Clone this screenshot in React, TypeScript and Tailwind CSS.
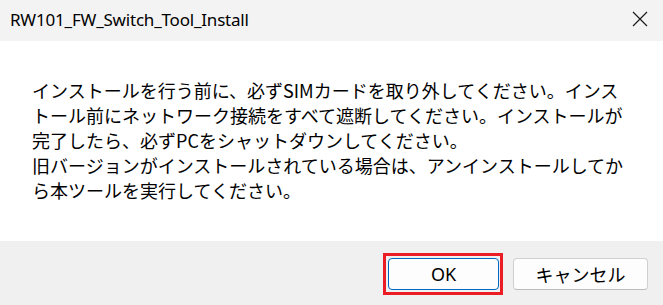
export default function App() {
  const lines = [
    "インストールを行う前に、必ずSIMカードを取り外してください。インス",
    "トール前にネットワーク接続をすべて遮断してください。インストールが",
    "完了したら、必ずPCをシャットダウンしてください。",
    "旧バージョンがインストールされている場合は、アンインストールしてか",
    "ら本ツールを実行してください。",
  ];

  return (
    <div className="w-[663px] h-[305px] flex flex-col bg-white overflow-hidden font-['Noto_Sans','Noto_Sans_CJK_JP',sans-serif] text-black">
      {/* Title bar */}
      <div className="h-[41px] shrink-0 bg-[#f3f3f3] flex items-center justify-between pl-[10px] pr-[15px]">
        <span className="text-[17px] leading-none tracking-[-0.2px] pb-[2px]">RW101_FW_Switch_Tool_Install</span>
        <svg width="16" height="16" viewBox="0 0 16 16" className="mb-[3px]">
          <path d="M1 1 L15 15 M15 1 L1 15" stroke="#1a1a1a" strokeWidth="1.2" fill="none" />
        </svg>
      </div>

      {/* Message */}
      <div className="flex-1 pt-[37px] pl-[32px]">
        <div className="text-[18px] leading-[25px] font-['Noto_Sans_CJK_JP',sans-serif]">
          {lines.map((l, i) => (
            <div key={i} className="whitespace-nowrap">{l}</div>
          ))}
        </div>
      </div>

      {/* Footer */}
      <div className="h-[64px] shrink-0 bg-[#f0f0f0] flex items-start justify-end gap-[10px] pt-[12px] pr-[15px]">
        <div className="border-[3px] border-[#ec1c24] p-[2px] pr-[1px]">
          <button className="w-[111px] h-[32px] rounded-[4px] bg-[#fdfdfd] border border-[#0067c0] text-[18px] leading-none flex items-center justify-center">
            OK
          </button>
        </div>
        <button className="mt-[5px] w-[135px] h-[32px] rounded-[4px] bg-[#fdfdfd] border border-[#d0d0d0] border-b-[#bcbcbc] text-[18px] leading-none flex items-center justify-center font-['Noto_Sans_CJK_JP',sans-serif]">
          キャンセル
        </button>
      </div>
    </div>
  );
}
